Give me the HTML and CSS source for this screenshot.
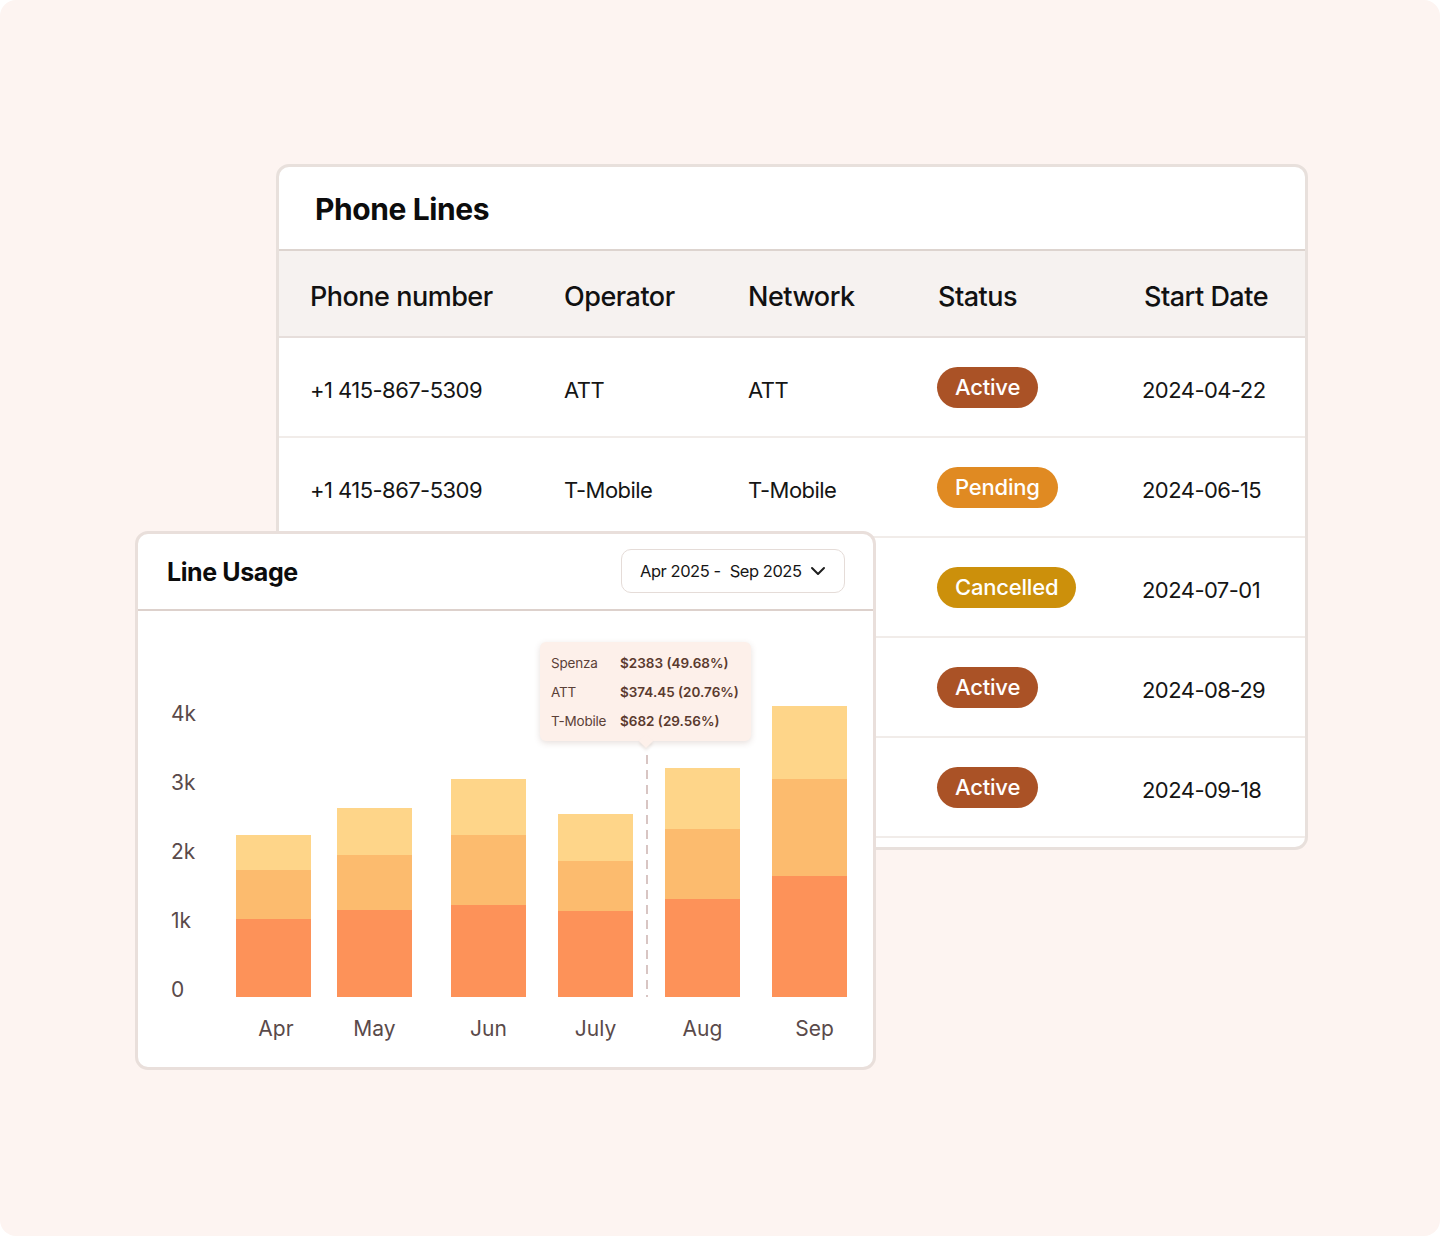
FILE: index.html
```html
<!DOCTYPE html>
<html lang="en">
<head>
<meta charset="utf-8">
<title>Phone Lines</title>
<link rel="stylesheet" href="styles.css">
</head>
<body>
<div class="canvas">
  <section class="lines-card">
    <h1 class="lines-title">Phone Lines</h1>
    <div class="row head">
      <div>Phone number</div><div>Operator</div><div>Network</div><div>Status</div><div>Start Date</div>
    </div>
    <div class="row">
      <div>+1 415-867-5309</div><div>ATT</div><div>ATT</div><div><span class="badge active">Active</span></div><div>2024-04-22</div>
    </div>
    <div class="row">
      <div>+1 415-867-5309</div><div>T-Mobile</div><div>T-Mobile</div><div><span class="badge pending">Pending</span></div><div>2024-06-15</div>
    </div>
    <div class="row">
      <div></div><div></div><div></div><div><span class="badge cancelled">Cancelled</span></div><div>2024-07-01</div>
    </div>
    <div class="row">
      <div></div><div></div><div></div><div><span class="badge active">Active</span></div><div>2024-08-29</div>
    </div>
    <div class="row">
      <div></div><div></div><div></div><div><span class="badge active">Active</span></div><div>2024-09-18</div>
    </div>
  </section>

  <section class="usage-card">
    <header class="usage-head">
      <h2 class="usage-title">Line Usage</h2>
      <button class="range">
        <span>Apr 2025 -</span><span class="range-end">Sep 2025</span>
        <svg class="chev" width="18" height="18" viewBox="0 0 18 18"><polyline points="3,6 9,12 15,6" fill="none" stroke="#1e1e1e" stroke-width="2" stroke-linecap="round" stroke-linejoin="round"/></svg>
      </button>
    </header>
    <div class="chart">
      <div class="yaxis">
        <span>4k</span><span>3k</span><span>2k</span><span>1k</span><span>0</span>
      </div>
      <div class="bars">
        <div class="col">
          <div class="stack"><div class="s3" style="height:35px"></div><div class="s2" style="height:49px"></div><div class="s1" style="height:78px"></div></div>
          <div class="xlabel">Apr</div>
        </div>
        <div class="col">
          <div class="stack"><div class="s3" style="height:47px"></div><div class="s2" style="height:55px"></div><div class="s1" style="height:87px"></div></div>
          <div class="xlabel">May</div>
        </div>
        <div class="col">
          <div class="stack"><div class="s3" style="height:56px"></div><div class="s2" style="height:70px"></div><div class="s1" style="height:92px"></div></div>
          <div class="xlabel">Jun</div>
        </div>
        <div class="col">
          <div class="stack"><div class="s3" style="height:47px"></div><div class="s2" style="height:50px"></div><div class="s1" style="height:86px"></div></div>
          <div class="xlabel">July</div>
        </div>
        <div class="col">
          <div class="stack"><div class="s3" style="height:61px"></div><div class="s2" style="height:70px"></div><div class="s1" style="height:98px"></div></div>
          <div class="xlabel">Aug</div>
        </div>
        <div class="col">
          <div class="stack"><div class="s3" style="height:73px"></div><div class="s2" style="height:97px"></div><div class="s1" style="height:121px"></div></div>
          <div class="xlabel">Sep</div>
        </div>
      </div>
    </div>
    <div class="cursor"></div>
    <div class="tooltip">
      <span class="tl">Spenza</span><span class="tv">$2383 (49.68%)</span>
      <span class="tl">ATT</span><span class="tv">$374.45 (20.76%)</span>
      <span class="tl">T-Mobile</span><span class="tv">$682 (29.56%)</span>
    </div>
  </section>
</div>
</body>
</html>
```

FILE: styles.css
```css
* { box-sizing: border-box; }
html, body { margin: 0; padding: 0; background: #ffffff; }
body { font-family: Inter, "Noto Sans", sans-serif; color: #111; }

.canvas {
  position: relative;
  width: 1440px;
  height: 1236px;
  background: #fdf4f1;
  border-radius: 16px;
  padding: 164px 0 0 276px;
}

.lines-card {
  width: 1032px;
  background: #fff;
  border: 3px solid #e8e0dc;
  border-radius: 13px;
  padding-bottom: 9px;
  overflow: hidden;
}
.lines-title {
  margin: 0;
  height: 84px;
  padding: 24px 0 0 36px;
  font-size: 30px;
  font-weight: 700;
  letter-spacing: -0.4px;
  line-height: 36px;
  color: #0c0c0c;
  border-bottom: 2px solid #ddd4cf;
}
.row {
  display: grid;
  grid-template-columns: 254px 184px 190px 204px 1fr;
  align-items: center;
  height: 100px;
  padding: 5px 0 0 31px;
  border-bottom: 2px solid #f1ece9;
  font-size: 22px;
  letter-spacing: -0.55px;
  color: #151515;
}
.row.head {
  height: 87px;
  padding-top: 5px;
  background: #f6f2f0;
  border-bottom: 2px solid #e6dedb;
  font-size: 27px;
  font-weight: 500;
  letter-spacing: -0.5px;
  color: #111;
}
.row.head > div:last-child { padding-left: 2px; }
.badge {
  display: inline-block;
  height: 41px;
  line-height: 41px;
  padding: 0 18px;
  border-radius: 21px;
  color: #fff;
  font-size: 22px;
  font-weight: 500;
  letter-spacing: -0.2px;
  margin: -4px 0 0 -1px;
}
.badge.active { background: #aa5226; }
.badge.pending { background: #e08a22; }
.badge.cancelled { background: #cc900b; }

.usage-card {
  position: absolute;
  left: 135px;
  top: 531px;
  width: 741px;
  height: 539px;
  background: #fff;
  border: 3px solid #e9dfdb;
  border-radius: 13px;
}
.usage-head {
  display: flex;
  align-items: center;
  justify-content: space-between;
  height: 77px;
  padding: 0 28px 0 29px;
  border-bottom: 2px solid #ddd1cc;
}
.usage-title {
  margin: 0;
  font-size: 25px;
  font-weight: 700;
  letter-spacing: -0.4px;
  color: #0c0c0c;
}
.range {
  display: flex;
  align-items: center;
  width: 224px;
  height: 44px;
  padding: 0 0 0 18px;
  margin-top: -2px;
  background: #fff;
  border: 1.5px solid #e5dcd8;
  border-radius: 10px;
  font-family: inherit;
  font-size: 16.5px;
  letter-spacing: -0.45px;
  color: #161616;
}
.range-end { margin-left: 9px; }
.chev { margin-left: 7px; }

.chart {
  display: flex;
  padding: 68px 0 0 33px;
}
.yaxis {
  display: flex;
  flex-direction: column;
  width: 65px;
  font-size: 21px;
  color: #5a4a4a;
}
.yaxis span { height: 69px; line-height: 69px; }
.bars {
  display: flex;
  gap: 32px;
}
.col { display: flex; flex-direction: column; align-items: center; width: 75px; }
.col:nth-child(2) { margin-left: -6px; }
.col:nth-child(3) { margin-left: 7px; }
.col:first-child .xlabel { margin-left: 5px; }
.col:last-child .xlabel { margin-left: 10px; }
.stack {
  display: flex;
  flex-direction: column;
  justify-content: flex-end;
  width: 75px;
  height: 318px;
}
.s3 { background: #fed589; }
.s2 { background: #fcbb6e; }
.s1 { background: #fd9259; }
.xlabel {
  margin-top: 20px;
  height: 24px;
  line-height: 24px;
  font-size: 21px;
  color: #5a4a4a;
}

.cursor {
  position: absolute;
  left: 508px;
  top: 221px;
  width: 2px;
  height: 242px;
  background: repeating-linear-gradient(to bottom, #d8c5c3 0 9px, transparent 9px 15px);
}
.tooltip {
  position: absolute;
  left: 402px;
  top: 108px;
  width: 211px;
  height: 99px;
  display: grid;
  grid-template-columns: 69px 1fr;
  align-content: center;
  row-gap: 12px;
  padding: 2px 0 0 11px;
  background: #fdf0ea;
  border-radius: 6px;
  box-shadow: 0 2px 6px rgba(120, 80, 60, 0.18);
  font-size: 13.5px;
  line-height: 17px;
  color: #5b4037;
}
.tooltip::after {
  content: "";
  position: absolute;
  left: 101px;
  bottom: -5px;
  width: 10px;
  height: 10px;
  background: #fdf0ea;
  transform: rotate(45deg);
  box-shadow: 2px 2px 3px rgba(120, 80, 60, 0.12);
}
.tl { letter-spacing: -0.2px; }
.tv { font-weight: 600; color: #5a3a2e; }
```
